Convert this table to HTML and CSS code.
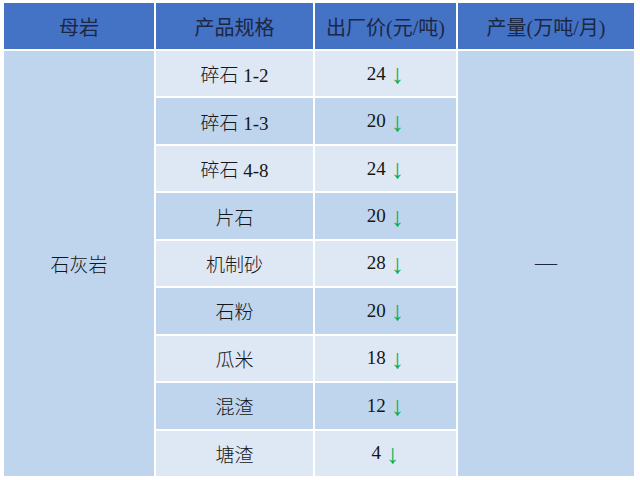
FILE: index.html
```html
<!DOCTYPE html>
<html lang="zh">
<head>
<meta charset="utf-8">
<link rel="stylesheet" href="styles.css">
</head>
<body>
<div class="table">
  <div class="th">母岩</div>
  <div class="th">产品规格</div>
  <div class="th">出厂价(元/吨)</div>
  <div class="th">产量(万吨/月)</div>

  <div class="cell merged left">石灰岩</div>

  <div class="cell light c2 r1">碎石 1-2</div>
  <div class="cell light c3 r1">24 <span class="down">↓</span></div>
  <div class="cell dark c2 r2">碎石 1-3</div>
  <div class="cell dark c3 r2">20 <span class="down">↓</span></div>
  <div class="cell light c2 r3">碎石 4-8</div>
  <div class="cell light c3 r3">24 <span class="down">↓</span></div>
  <div class="cell dark c2 r4">片石</div>
  <div class="cell dark c3 r4">20 <span class="down">↓</span></div>
  <div class="cell light c2 r5">机制砂</div>
  <div class="cell light c3 r5">28 <span class="down">↓</span></div>
  <div class="cell dark c2 r6">石粉</div>
  <div class="cell dark c3 r6">20 <span class="down">↓</span></div>
  <div class="cell light c2 r7">瓜米</div>
  <div class="cell light c3 r7">18 <span class="down">↓</span></div>
  <div class="cell dark c2 r8">混渣</div>
  <div class="cell dark c3 r8">12 <span class="down">↓</span></div>
  <div class="cell light c2 r9">塘渣</div>
  <div class="cell light c3 r9">4 <span class="down">↓</span></div>

  <div class="cell merged right"><span class="dash">—</span></div>
</div>
</body>
</html>
```
FILE: styles.css
```css
html, body {
  margin: 0;
  padding: 0;
  background: #ffffff;
}
body {
  padding: 3px 0 0 4px;
  font-family: "Liberation Serif", "Noto Sans CJK SC", serif;
}
.table {
  width: 630px;
  height: 473px;
  display: grid;
  grid-template-columns: 150px 157px 141px 176px;
  grid-template-rows: 46px repeat(9, 1fr);
  gap: 2px;
  background: #ffffff;
}
.th {
  background: #4472c4;
  color: #1c2744;
  font-size: 20px;
  display: flex;
  align-items: center;
  justify-content: center;
}
.cell {
  display: flex;
  align-items: center;
  justify-content: center;
  font-size: 19px;
  font-weight: 300;
  color: #161616;
}
.light { background: #dee7f4; }
.dark { background: #bed5ed; }
.merged {
  background: #bed5ed;
  grid-row: 2 / 11;
}
.left { grid-column: 1; }
.right { grid-column: 4; }
.c2 { grid-column: 2; }
.c3 { grid-column: 3; }
.r1 { grid-row: 2; }
.r2 { grid-row: 3; }
.r3 { grid-row: 4; }
.r4 { grid-row: 5; }
.r5 { grid-row: 6; }
.r6 { grid-row: 7; }
.r7 { grid-row: 8; }
.r8 { grid-row: 9; }
.r9 { grid-row: 10; }
.down {
  color: #00b050;
  font-size: 27px;
  line-height: 1;
  margin-left: 5px;
  position: relative;
  top: 1px;
}
.dash {
  font-size: 22px;
  color: #1c2744;
}
```
